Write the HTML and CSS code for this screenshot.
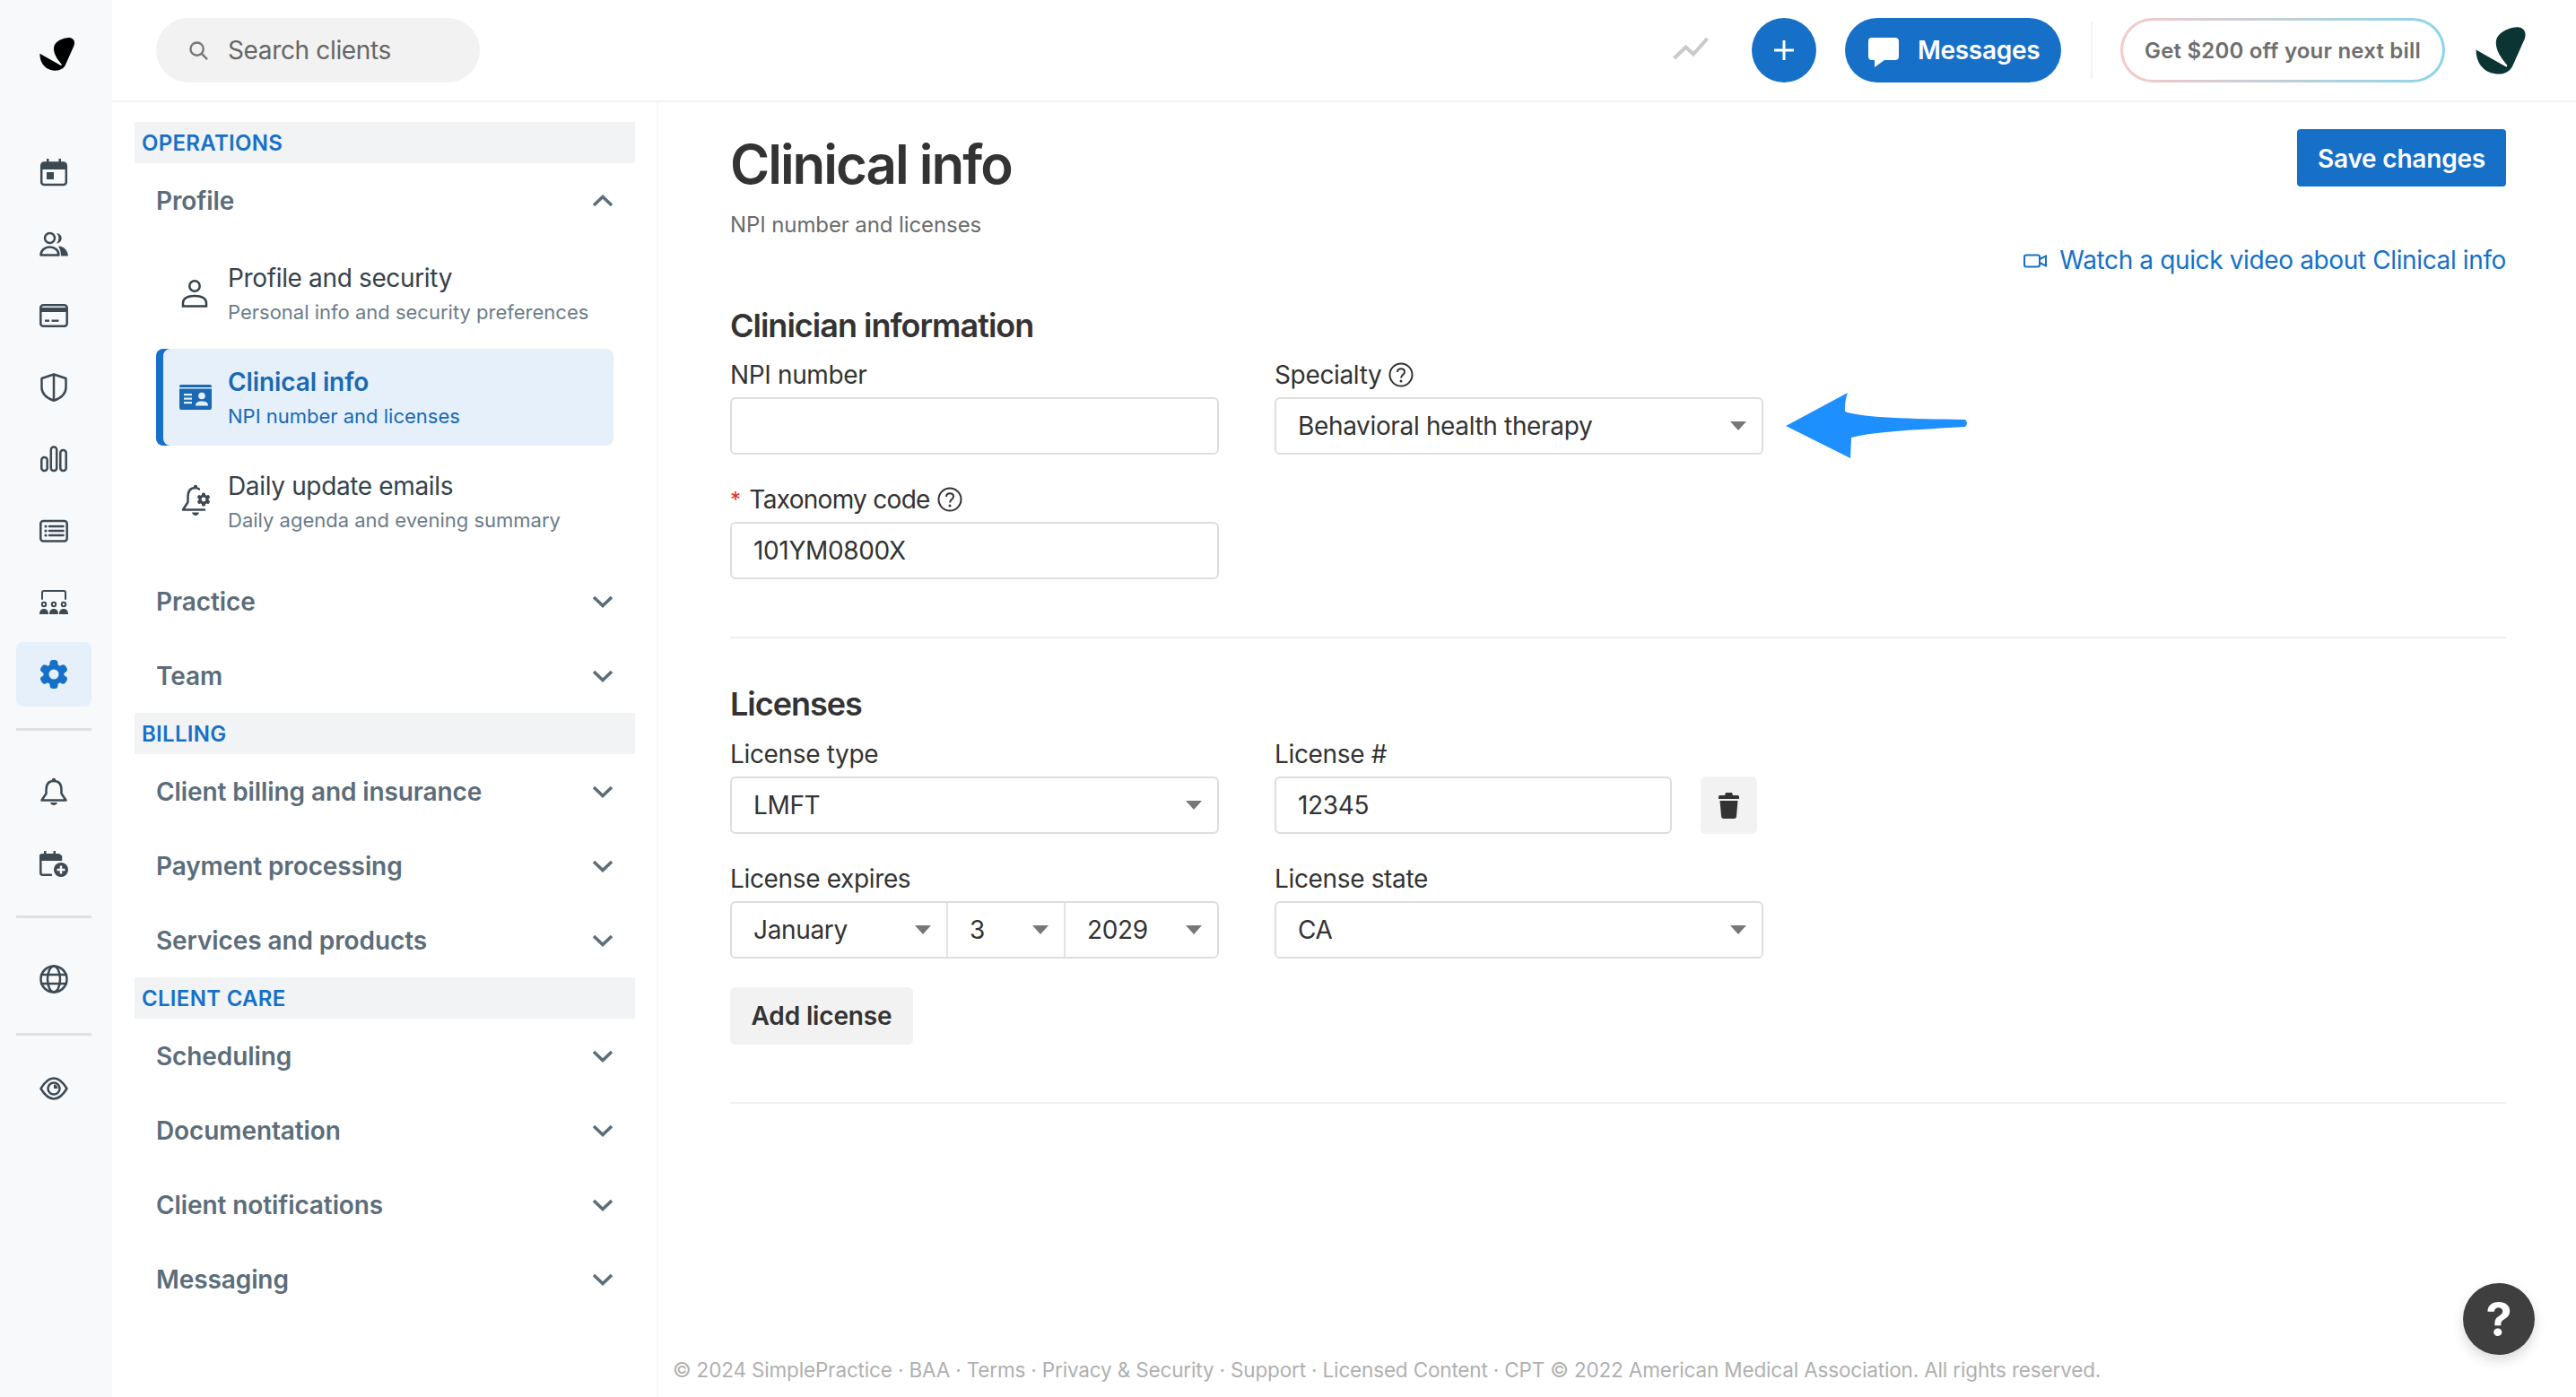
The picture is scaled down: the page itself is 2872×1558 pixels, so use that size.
FILE: index.html
```html
<!DOCTYPE html>
<html lang="en">
<head>
<meta charset="utf-8">
<title>Clinical info</title>
<link rel="stylesheet" href="styles.css">
</head>
<body>
<div class="app">
  <nav class="rail">
    <div class="rail-logo">
      <svg class="logo-mark" viewBox="132 120 122 118"><path d="M208 216C190 195 178 175 181 155C185 135 215 122 235 123C252 125 255 140 250 152L222 215C215 232 200 237 188 237C155 237 132 215 132 178L206 220Z"/></svg>
    </div>
    <div class="rail-group rail-main">
      <div class="rail-slot"><svg class="rail-icon" viewBox="0 0 32 32"><rect class="ln" x="2.2" y="5.5" width="27.6" height="24.5" rx="3"/><path class="fl" d="M2 8a3 3 0 0 1 3-3h3V1h2.500v4h11V1H24v4h3a3 3 0 0 1 3 3v5H2z"/><rect class="fl" x="8" y="16" width="8" height="8"/></svg></div>
      <div class="rail-slot"><svg class="rail-icon" viewBox="0 0 32 32"><circle class="ln" cx="11.5" cy="9.5" r="5.5"/><path class="fl" d="M19 4a5.7 5.7 0 1 1 0 11.4A8 8 0 0 0 19 4z"/><path class="ln" d="M1.5 28.5c0-5.500 4.500-9 10-9s10 3.500 10 9z"/><path class="fl" d="M21 18.500c6 0 10.500 4.500 11 11h-8c0-4-1-8-3-11z"/></svg></div>
      <div class="rail-slot"><svg class="rail-icon" viewBox="0 0 32 32"><rect class="ln" x="1.300" y="4.300" width="29.400" height="23.400" rx="3"/><rect class="fl" x="1.500" y="7" width="29" height="5"/><rect class="fl" x="6" y="20.500" width="5" height="2.400"/><rect class="fl" x="13.500" y="20.500" width="8" height="2.400"/></svg></div>
      <div class="rail-slot"><svg class="rail-icon" viewBox="0 0 32 32"><path class="ln" d="M16 1.500L29.500 6V16C29.500 23 24 28 16 30.800C8 28 2.500 23 2.500 16V6Z"/><path class="ln" d="M16 2V30"/></svg></div>
      <div class="rail-slot"><svg class="rail-icon" viewBox="0 0 32 32"><rect class="ln" x="2.300" y="14" width="6.400" height="15" rx="3"/><rect class="ln" x="12.800" y="2.500" width="6.400" height="26.500" rx="3"/><rect class="ln" x="23.300" y="6" width="6.400" height="23" rx="3"/></svg></div>
      <div class="rail-slot"><svg class="rail-icon" viewBox="0 0 32 32"><rect class="ln" x="1.300" y="5" width="29.400" height="22.500" rx="3"/><circle class="fl" cx="7" cy="11" r="1.600"/><circle class="fl" cx="7" cy="16" r="1.600"/><circle class="fl" cx="7" cy="21" r="1.600"/><path class="ln" d="M11 11H26.500M11 16H26.500M11 21H26.500"/></svg></div>
      <div class="rail-slot"><svg class="rail-icon" viewBox="0 0 32 32"><path class="ln thin" d="M3 12V5a2 2 0 0 1 2-2H27a2 2 0 0 1 2 2v7"/><circle class="ln thin" cx="5" cy="18" r="2.200"/><circle class="ln thin" cx="16" cy="18" r="2.200"/><circle class="ln thin" cx="27" cy="18" r="2.200"/><path class="fl" d="M0 29c0-4 2-6 5-6s5 2 5 6zM11 29c0-4 2-6 5-6s5 2 5 6zM22 29c0-4 2-6 5-6s5 2 5 6z"/></svg></div>
      <div class="rail-slot">
        <div class="rail-active">
          <svg class="rail-icon gear" viewBox="0 0 32 32"><circle cx="16" cy="16" r="11.500"/><rect x="11.500" y="0" width="9" height="32" rx="3.500"/><rect x="11.500" y="0" width="9" height="32" rx="3.500" transform="rotate(60 16 16)"/><rect x="11.500" y="0" width="9" height="32" rx="3.500" transform="rotate(120 16 16)"/><circle class="gear-hole" cx="16" cy="16" r="5.500"/></svg>
        </div>
      </div>
    </div>
    <div class="rail-rule"></div>
    <div class="rail-group rail-alerts">
      <div class="rail-slot"><svg class="rail-icon" viewBox="0 0 32 32"><circle class="fl" cx="16" cy="3" r="2.200"/><path class="ln" d="M16 4C9.500 4 7.500 9 7.500 14V18L2.500 25.500H29.500L24.500 18V14C24.500 9 22.500 4 16 4Z"/><path class="fl" d="M12 28H20C19 32 13 32 12 28Z"/></svg></div>
      <div class="rail-slot"><svg class="rail-icon" viewBox="0 0 32 32"><path class="ln" d="M13 28.700H3.500A2.200 2.200 0 0 1 1.300 26.500V7.500"/><path class="fl" d="M0 8a3 3 0 0 1 3-3h2V2h2.500v3h8V2H18v3h3a3 3 0 0 1 3 3v5H0z"/><path class="ln" d="M24 8V12"/><circle class="fl" cx="24" cy="23" r="8"/><path class="plus-mark" d="M24 18.500V27.500M19.500 23H28.500"/></svg></div>
    </div>
    <div class="rail-rule"></div>
    <div class="rail-group rail-world">
      <div class="rail-slot"><svg class="rail-icon" viewBox="0 0 32 32"><circle class="ln" cx="16" cy="16" r="14.500"/><ellipse class="ln" cx="16" cy="16" rx="7" ry="14.500"/><path class="ln" d="M2 11H30M2 21H30"/></svg></div>
    </div>
    <div class="rail-rule"></div>
    <div class="rail-group rail-view">
      <div class="rail-slot"><svg class="rail-icon" viewBox="0 0 32 32"><path class="ln" d="M1.500 16C6 8.500 11 4.500 16 4.500S26 8.500 30.500 16C26 23.500 21 27.500 16 27.500S6 23.500 1.500 16Z"/><circle class="ln" cx="16" cy="16" r="6.500"/><path class="fl" d="M16 11.500a4.500 4.500 0 0 1 4.500 4.500H16z"/></svg></div>
    </div>
  </nav>

  <div class="shell">
    <header class="topbar">
      <div class="search">
        <svg class="search-icon" viewBox="0 0 22 22"><circle cx="9" cy="9" r="7.500"/><path d="M14.500 14.500L21 21"/></svg>
        <span>Search clients</span>
      </div>
      <div class="topbar-actions">
        <svg class="trend" viewBox="0 0 40 27"><path d="M1.500 25L14.500 12.500L23 20.500L38.500 3"/></svg>
        <button class="round-add" type="button"><svg class="plus" viewBox="0 0 22 22"><path d="M11 0V22M0 11H22"/></svg></button>
        <button class="messages" type="button">
          <svg class="bubble" viewBox="0 0 34 33"><path d="M4 0H30A4 4 0 0 1 34 4V21A4 4 0 0 1 30 25H18L7 33V25H4A4 4 0 0 1 0 21V4A4 4 0 0 1 4 0Z"/></svg>
          <span>Messages</span>
        </button>
        <span class="top-sep"></span>
        <button class="promo" type="button">Get $200 off your next bill</button>
        <svg class="logo-account" viewBox="132 120 122 118"><path d="M208 216C190 195 178 175 181 155C185 135 215 122 235 123C252 125 255 140 250 152L222 215C215 232 200 237 188 237C155 237 132 215 132 178L206 220Z"/></svg>
      </div>
    </header>

    <div class="workspace">
      <aside class="side">
        <div class="side-head">OPERATIONS</div>
        <div class="side-row"><span>Profile</span><svg class="chev" viewBox="0 0 24 14"><path d="M2 12L12 2.500L22 12"/></svg></div>
        <div class="sub-list">
          <a class="sub-item">
            <span class="sub-icon"><svg class="icon-person" viewBox="0 0 30 32"><circle cx="15" cy="8" r="5.700"/><path d="M2 30.500V27C2 22 7 19 15 19S28 22 28 27V30.500Z"/></svg></span>
            <span class="sub-text"><b>Profile and security</b><small>Personal info and security preferences</small></span>
          </a>
          <a class="sub-item is-active">
            <span class="sub-icon"><svg class="icon-card" viewBox="0 0 36 28"><path class="card-fill" d="M2 0H34A2 2 0 0 1 36 2V26A2 2 0 0 1 34 28H2A2 2 0 0 1 0 26V2A2 2 0 0 1 2 0Z"/><rect class="card-white" x="0" y="3" width="36" height="1.500"/><rect class="card-white" x="5" y="10" width="9" height="2.200"/><rect class="card-white" x="5" y="14.500" width="9" height="2.200"/><rect class="card-white" x="5" y="19" width="9" height="2.200"/><circle class="card-white" cx="25" cy="12.500" r="3.800"/><path class="card-white" d="M18 23.500C18 19.500 21 18.500 25 18.500S32 19.500 32 23.500Z"/></svg></span>
            <span class="sub-text"><b>Clinical info</b><small>NPI number and licenses</small></span>
          </a>
          <a class="sub-item">
            <span class="sub-icon"><svg class="icon-bell" viewBox="0 0 34 38"><circle class="fl" cx="16" cy="3" r="2.200"/><path class="ln" d="M20 5.500C18.500 4.500 17.500 4 16 4C9.500 4 7.500 9 7.500 14V20L2 28.500H26"/><path class="fl" d="M12 31.500H20C19 36 13 36 12 31.500Z"/><g class="fl"><circle cx="25" cy="17" r="5.500"/><rect x="23" y="9.500" width="4" height="15" rx="1.500"/><rect x="23" y="9.500" width="4" height="15" rx="1.500" transform="rotate(60 25 17)"/><rect x="23" y="9.500" width="4" height="15" rx="1.500" transform="rotate(120 25 17)"/></g><circle class="bell-hole" cx="25" cy="17" r="2.400"/></svg></span>
            <span class="sub-text"><b>Daily update emails</b><small>Daily agenda and evening summary</small></span>
          </a>
        </div>
        <div class="side-row"><span>Practice</span><svg class="chev" viewBox="0 0 24 14"><path d="M2 2L12 11.500L22 2"/></svg></div>
        <div class="side-row"><span>Team</span><svg class="chev" viewBox="0 0 24 14"><path d="M2 2L12 11.500L22 2"/></svg></div>
        <div class="side-head">BILLING</div>
        <div class="side-row"><span>Client billing and insurance</span><svg class="chev" viewBox="0 0 24 14"><path d="M2 2L12 11.500L22 2"/></svg></div>
        <div class="side-row"><span>Payment processing</span><svg class="chev" viewBox="0 0 24 14"><path d="M2 2L12 11.500L22 2"/></svg></div>
        <div class="side-row"><span>Services and products</span><svg class="chev" viewBox="0 0 24 14"><path d="M2 2L12 11.500L22 2"/></svg></div>
        <div class="side-head">CLIENT CARE</div>
        <div class="side-row"><span>Scheduling</span><svg class="chev" viewBox="0 0 24 14"><path d="M2 2L12 11.500L22 2"/></svg></div>
        <div class="side-row"><span>Documentation</span><svg class="chev" viewBox="0 0 24 14"><path d="M2 2L12 11.500L22 2"/></svg></div>
        <div class="side-row"><span>Client notifications</span><svg class="chev" viewBox="0 0 24 14"><path d="M2 2L12 11.500L22 2"/></svg></div>
        <div class="side-row"><span>Messaging</span><svg class="chev" viewBox="0 0 24 14"><path d="M2 2L12 11.500L22 2"/></svg></div>
      </aside>

      <div class="content">
        <main class="page">
          <div class="page-head">
            <h1>Clinical info</h1>
            <button class="btn-save" type="button">Save changes</button>
          </div>
          <p class="page-sub">NPI number and licenses</p>
          <p class="video-link">
            <svg class="video-icon" viewBox="0 0 26 16"><rect x="1" y="1.500" width="17" height="13" rx="2"/><path d="M18 6L25 2.500V13.500L18 10"/></svg>
            <a>Watch a quick video about Clinical info</a>
          </p>

          <section class="block block-info">
            <h2>Clinician information</h2>
            <div class="form-grid">
              <div class="form-item">
                <label class="lbl">NPI number</label>
                <div class="field"></div>
              </div>
              <div class="form-item">
                <label class="lbl">Specialty <svg class="help" viewBox="0 0 28 28"><circle cx="14" cy="14" r="12.500"/><path d="M10 11C10 8.500 11.800 7.200 14 7.200S18 8.600 18 10.800C18 14 14 14 14 17.500"/><circle class="help-dot" cx="14" cy="21" r="1.500"/></svg></label>
                <div class="field field-select has-arrow">
                  <span>Behavioral health therapy</span>
                  <svg class="arrow" viewBox="0 0 204 73"><path d="M0 37L69 0C66 8 66 15 66 21C85 28 140 29 200 30Q204 34 200 38C150 41 100 43 73 50L72 73Z"/></svg>
                </div>
              </div>
              <div class="form-item">
                <label class="lbl lbl-tight"><i class="req">*</i> Taxonomy code <svg class="help" viewBox="0 0 28 28"><circle cx="14" cy="14" r="12.500"/><path d="M10 11C10 8.500 11.800 7.200 14 7.200S18 8.600 18 10.800C18 14 14 14 14 17.500"/><circle class="help-dot" cx="14" cy="21" r="1.500"/></svg></label>
                <div class="field"><span>101YM0800X</span></div>
              </div>
            </div>
          </section>
          <hr class="rule rule-a">

          <section class="block block-lic">
            <h2>Licenses</h2>
            <div class="form-grid">
              <div class="form-item">
                <label class="lbl">License type</label>
                <div class="field field-select"><span>LMFT</span></div>
              </div>
              <div class="form-item">
                <label class="lbl">License #</label>
                <div class="field-row">
                  <div class="field field-grow"><span>12345</span></div>
                  <button class="btn-trash" type="button"><svg class="trash" viewBox="0 0 23 29"><path d="M8 0H15L16 3H21.500A1.500 1.500 0 0 1 23 4.500V7H0V4.500A1.500 1.500 0 0 1 1.500 3H7ZM1.500 9H21.500L20 26A3 3 0 0 1 17 29H6A3 3 0 0 1 3 26Z"/></svg></button>
                </div>
              </div>
              <div class="form-item">
                <label class="lbl">License expires</label>
                <div class="date-group">
                  <div class="date-part date-month field-select"><span>January</span></div>
                  <div class="date-part date-day field-select"><span>3</span></div>
                  <div class="date-part date-year field-select"><span>2029</span></div>
                </div>
              </div>
              <div class="form-item">
                <label class="lbl">License state</label>
                <div class="field field-select"><span>CA</span></div>
              </div>
            </div>
            <button class="btn-add" type="button">Add license</button>
          </section>
          <hr class="rule rule-b">
        </main>
        <footer class="foot">© 2024 SimplePractice · BAA · Terms · Privacy &amp; Security · Support · Licensed Content · CPT © 2022 American Medical Association. All rights reserved.</footer>
      </div>
    </div>
  </div>
  <button class="help-fab" type="button">?</button>
</div>
</body>
</html>
```
FILE: styles.css
```css
* { box-sizing: border-box; }
html, body { margin: 0; height: 100%; }
body { font-family: Inter, "Liberation Sans", sans-serif; color: #333; background: #fff; overflow: hidden; }
button { font-family: inherit; border: 0; cursor: pointer; }
.app { display: flex; height: 100vh; position: relative; }

.rail { flex: 0 0 125px; background: #f8f9fa; display: flex; flex-direction: column; align-items: center; padding-right: 5px; }
.rail-logo { height: 152px; padding: 41px 0 0 8px; }
.logo-mark { display: block; width: 40px; height: 38px; fill: #000; }
.rail-group { display: flex; flex-direction: column; }
.rail-slot { width: 84px; height: 80px; display: flex; align-items: center; justify-content: center; }
.rail-icon { display: block; width: 32px; height: 32px; overflow: visible; color: #3d4a54; }
.ln { fill: none; stroke: #3d4a54; stroke-width: 2.500; stroke-linejoin: round; stroke-linecap: round; }
.ln.thin { stroke-width: 2; }
.fl { fill: #3d4a54; }
.plus-mark { fill: none; stroke: #f8f9fa; stroke-width: 2.500; }
.rail-active { width: 84px; height: 72px; background: #e6f0fa; border-radius: 8px; display: flex; align-items: center; justify-content: center; }
.gear { fill: #1670c8; }
.gear-hole { fill: #e6f0fa; }
.rail-rule { width: 84px; height: 3px; background: #e0e0e0; flex: none; }
.rail-main { margin-bottom: 20px; }
.rail-alerts { margin: 28px 0 18px; }
.rail-world { margin: 28px 0 20px; }
.rail-view { margin-top: 19px; }

.shell { flex: 1; min-width: 0; display: flex; flex-direction: column; }
.topbar { flex: 0 0 114px; display: flex; align-items: flex-start; justify-content: space-between; padding: 20px 55px 0 49px; border-bottom: 2px solid #f2f2f2; }
.search { width: 361px; height: 72px; border-radius: 36px; background: #f2f2f2; display: flex; align-items: center; gap: 22px; padding-left: 37px; color: #666; font-size: 28px; letter-spacing: -0.350px; }
.search-icon { width: 21px; height: 21px; fill: none; stroke: #777; stroke-width: 2.500; flex: none; }
.topbar-actions { display: flex; align-items: center; height: 72px; }
.trend { width: 40px; height: 27px; fill: none; stroke: #c9c9c9; stroke-width: 4; margin-right: 48px; margin-top: -6px; }
.round-add { width: 72px; height: 72px; border-radius: 50%; background: #1670c8; display: flex; align-items: center; justify-content: center; padding: 0; margin-right: 32px; }
.plus { width: 22px; height: 22px; fill: none; stroke: #fff; stroke-width: 3; }
.messages { width: 241px; height: 72px; border-radius: 36px; background: #1670c8; color: #fff; display: flex; align-items: center; gap: 21px; padding: 0 0 0 26px; font-size: 28px; font-weight: 600; letter-spacing: -0.300px; }
.bubble { width: 34px; height: 33px; fill: #fff; flex: none; margin-top: 4px; }
.top-sep { width: 2px; height: 64px; background: #f2f2f2; margin: 0 31px 0 33px; }
.promo { width: 362px; height: 72px; border-radius: 36px; border: 3px solid transparent; background: linear-gradient(#fff, #fff) padding-box, linear-gradient(90deg, #f6c9c9, #8bd4e8) border-box; color: #6e6e6e; font-size: 24px; font-weight: 600; letter-spacing: 0.200px; padding: 0; }
.logo-account { width: 57px; height: 54px; fill: #0b3433; margin-left: 34px; }

.workspace { flex: 1; min-height: 0; display: flex; }
.side { flex: 0 0 609px; border-right: 2px solid #f7f7f7; padding: 22px 24px 0 25px; }
.side-head { height: 46px; background: #f1f3f5; color: #1670c8; font-size: 24px; font-weight: 600; line-height: 48px; padding-left: 8px; letter-spacing: 0.300px; }
.side-row { height: 83px; display: flex; align-items: center; justify-content: space-between; padding: 0 0 0 24px; margin-right: 24px; color: #5c6d7a; font-size: 28px; font-weight: 600; letter-spacing: -0.100px; }
.chev { width: 24px; height: 14px; fill: none; stroke: #5c6d7a; stroke-width: 3.500; }
.sub-list { display: flex; flex-direction: column; gap: 8px; padding: 8px 0 16px 24px; margin-right: 24px; }
.sub-item { height: 108px; display: flex; align-items: center; border-radius: 8px; padding-left: 20px; }
.sub-icon { width: 60px; flex: none; display: flex; }
.sub-text { display: flex; flex-direction: column; gap: 1px; padding-top: 1px; }
.sub-text b { font-size: 28px; font-weight: 400; line-height: 40px; color: #36424b; letter-spacing: -0.350px; }
.sub-text small { font-size: 22px; line-height: 34px; color: #6b7c88; }
.sub-item.is-active { background: #e6f0fa; box-shadow: inset 8px 0 0 #1670c8; }
.is-active .sub-text b { color: #1a69b5; font-weight: 600; letter-spacing: -0.100px; }
.is-active .sub-text small { color: #1a69b5; }
.icon-person { width: 30px; height: 32px; margin-left: 8px; fill: none; stroke: #36424b; stroke-width: 2.500; }
.icon-card { width: 36px; height: 28px; margin-left: 6px; }
.card-fill { fill: #1a69b5; }
.card-white { fill: #e6f0fa; }
.icon-bell { width: 34px; height: 38px; margin-left: 8px; overflow: visible; }
.bell-hole { fill: #fff; }

.content { flex: 1; min-width: 0; display: flex; flex-direction: column; }
.page { flex: 1; padding: 30px 78px 0 80px; }
.page-head { display: flex; justify-content: space-between; align-items: flex-start; }
h1 { margin: 0; font-size: 60px; line-height: 78px; font-weight: 600; color: #333; letter-spacing: -2px; }
.btn-save { width: 233px; height: 64px; border-radius: 4px; background: #1670c8; color: #fff; font-size: 28px; font-weight: 600; letter-spacing: -0.200px; padding: 2px 0 0; }
.page-sub { margin: 12px 0 0; font-size: 24px; line-height: 34px; color: #6b6b6b; letter-spacing: -0.100px; }
.video-link { margin: 5px 0 0; display: flex; justify-content: flex-end; align-items: center; gap: 14px; font-size: 28px; line-height: 34px; color: #1670c8; letter-spacing: -0.370px; }
.video-icon { width: 26px; height: 16px; fill: none; stroke: #1670c8; stroke-width: 2; margin-top: 2px; }
h2 { margin: 0; font-size: 36px; line-height: 44px; font-weight: 600; color: #333; letter-spacing: -1px; }
.block-info { margin-top: 34px; }
.block-info h2 { margin-bottom: 16px; }
.block-lic { margin-top: 51px; }
.block-lic h2 { margin-bottom: 17px; }
.form-grid { display: grid; grid-template-columns: 545px 545px; column-gap: 62px; row-gap: 33px; }
.lbl { display: flex; align-items: center; gap: 8px; height: 34px; margin-bottom: 8px; font-size: 28px; color: #333; letter-spacing: -0.350px; }
.lbl-tight { letter-spacing: -0.700px; }
.req { font-style: normal; color: #e0301e; font-size: 24px; margin-right: 2px; }
.help { width: 28px; height: 28px; fill: none; stroke: #333; stroke-width: 2; }
.help-dot { fill: #333; stroke: none; }
.field { position: relative; height: 64px; border: 2px solid #dedede; border-radius: 6px; display: flex; align-items: center; padding-left: 24px; font-size: 28px; color: #333; background: #fff; letter-spacing: -0.350px; }
.field-select { position: relative; }
.field-select::after { content: ""; position: absolute; right: 17px; top: 50%; margin-top: -5px; border-left: 9px solid transparent; border-right: 9px solid transparent; border-top: 10px solid #777; }
.arrow { position: absolute; left: 568px; top: -7px; width: 204px; height: 73px; fill: #1e8fff; }
.field-row { display: flex; gap: 32px; }
.field-grow { flex: 0 0 443px; }
.btn-trash { width: 63px; height: 64px; border-radius: 6px; background: #f2f2f2; display: flex; align-items: center; justify-content: center; padding: 0; }
.trash { width: 23px; height: 29px; fill: #333; }
.date-group { display: flex; height: 64px; border: 2px solid #dedede; border-radius: 6px; }
.date-part { display: flex; align-items: center; padding-left: 24px; font-size: 28px; color: #333; letter-spacing: -0.350px; }
.date-month { width: 241px; border-right: 2px solid #e4e4e4; }
.date-day { width: 131px; border-right: 2px solid #e4e4e4; }
.date-year { flex: 1; }
.btn-add { display: block; margin-top: 32px; width: 204px; height: 64px; border-radius: 6px; background: #f2f2f2; color: #333; font-size: 28px; font-weight: 600; letter-spacing: -0.150px; padding: 0; }
.rule { border: 0; height: 2px; background: #f0f0f0; margin: 0; }
.rule-a { margin-top: 64px; }
.rule-b { margin-top: 64px; }
.foot { padding: 0 0 12px 16px; font-size: 22.500px; line-height: 36px; color: #b0b0b0; letter-spacing: -0.160px; }
.help-fab { position: absolute; right: 46px; bottom: 47px; width: 80px; height: 80px; border-radius: 50%; background: #3f3f3f; color: #fff; font-size: 52px; font-weight: 700; box-shadow: 0 6px 14px rgba(0,0,0,.15); padding: 0; }
```
